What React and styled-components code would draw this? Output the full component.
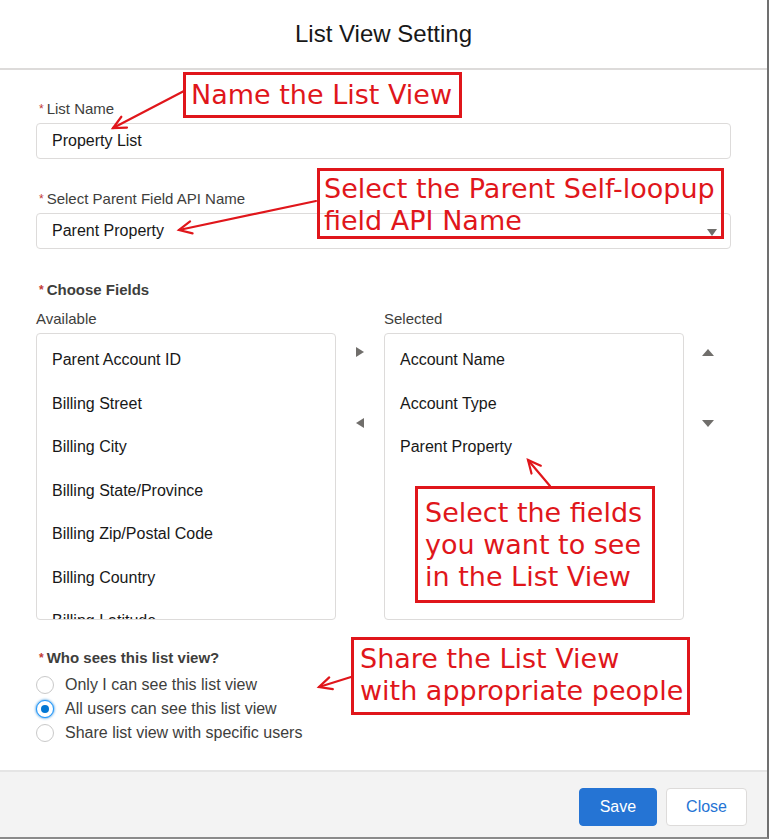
import styled, { createGlobalStyle } from "styled-components";

const GlobalStyle = createGlobalStyle`
  html, body {
    margin: 0;
    padding: 0;
    background: #ffffff;
  }
  body {
    font-family: "Liberation Sans", Arial, sans-serif;
    color: #181818;
  }
`;

const Modal = styled.div`
  position: relative;
  width: 767px;
  height: 837px;
  border-right: 2px solid #707070;
  border-bottom: 2px solid #8a8a8a;
  background: #ffffff;
  display: flex;
  flex-direction: column;
  overflow: hidden;
`;

const Header = styled.header`
  height: 68px;
  border-bottom: 2px solid #dddbda;
  display: flex;
  align-items: center;
  justify-content: center;
  font-size: 24px;
  color: #181818;
`;

const Body = styled.main`
  flex: 1;
  padding: 30px 36px 0 36px;
`;

const Label = styled.div`
  font-size: 15px;
  font-weight: ${(p) => (p.bold ? 700 : 400)};
  line-height: 18px;
  color: #3e3e3c;
  margin: ${(p) => p.margin || "0 0 5px 0"};
  white-space: nowrap;
`;

const Req = styled.abbr`
  color: #c23934;
  font-size: 12px;
  text-decoration: none;
  margin: 0 3px 0 3px;
  vertical-align: 1px;
`;

const Field = styled.div`
  position: relative;
  height: 36px;
  box-sizing: border-box;
  border: 1px solid #dddbda;
  border-radius: 4px;
  padding: 0 15px;
  display: flex;
  align-items: center;
  font-size: 16px;
  color: #181818;
  margin-bottom: ${(p) => p.gap || "31px"};
`;

const Caret = styled.span`
  position: absolute;
  right: 13px;
  top: 15px;
  width: 0;
  height: 0;
  border-left: 5px solid transparent;
  border-right: 5px solid transparent;
  border-top: 7px solid #706e6b;
`;

const Dueling = styled.div`
  display: grid;
  grid-template-columns: 300px 48px 300px 48px;
  grid-template-rows: auto 287px;
`;

const ColLabel = styled.div`
  font-size: 15px;
  line-height: 18px;
  color: #3e3e3c;
  margin: 11px 0 5px 0;
  grid-column: ${(p) => p.col};
`;

const ListBox = styled.ul`
  grid-column: ${(p) => p.col};
  margin: 0;
  padding: 4px 0 0 0;
  list-style: none;
  border: 1px solid #dddbda;
  border-radius: 4px;
  overflow: hidden;
`;

const ListItem = styled.li`
  height: 43.5px;
  line-height: 43.5px;
  padding-left: 15px;
  font-size: 16px;
  color: #181818;
  white-space: nowrap;
`;

const ArrowCol = styled.div`
  grid-column: ${(p) => p.col};
  display: flex;
  flex-direction: column;
  align-items: center;
  padding-top: 7px;
  gap: 47px;
`;

const ArrowBtn = styled.div`
  width: 24px;
  height: 24px;
  display: flex;
  align-items: center;
  justify-content: center;
`;

const Tri = styled.span`
  width: 0;
  height: 0;
  ${(p) =>
    p.dir === "right"
      ? "border-top: 5px solid transparent; border-bottom: 5px solid transparent; border-left: 8px solid #706e6b;"
      : p.dir === "left"
      ? "border-top: 5px solid transparent; border-bottom: 5px solid transparent; border-right: 8px solid #706e6b;"
      : p.dir === "up"
      ? "border-left: 6px solid transparent; border-right: 6px solid transparent; border-bottom: 7px solid #706e6b;"
      : "border-left: 6px solid transparent; border-right: 6px solid transparent; border-top: 7px solid #706e6b;"}
`;

const RadioGroup = styled.div`
  margin-top: 6px;
  display: flex;
  flex-direction: column;
`;

const RadioRow = styled.label`
  height: 24px;
  display: flex;
  align-items: center;
  gap: 11px;
  font-size: 16px;
  color: #3e3e3c;
`;

const RadioDot = styled.span`
  width: 18px;
  height: 18px;
  box-sizing: border-box;
  border-radius: 50%;
  border: 1px solid ${(p) => (p.checked ? "#1b96ff" : "#c9c9c9")};
  box-shadow: ${(p) => (p.checked ? "0 0 3px #0176d3" : "none")};
  display: flex;
  align-items: center;
  justify-content: center;
  background: #ffffff;

  &::after {
    content: "";
    display: ${(p) => (p.checked ? "block" : "none")};
    width: 8px;
    height: 8px;
    border-radius: 50%;
    background: #0176d3;
  }
`;

const Footer = styled.footer`
  height: 67px;
  border-top: 2px solid #e5e5e5;
  background: #f3f3f3;
  display: flex;
  justify-content: flex-end;
  align-items: flex-start;
  padding: 16px 20px 0 0;
  box-sizing: border-box;
  gap: 9px;
`;

const Button = styled.button`
  height: 38px;
  padding: 0 ${(p) => (p.primary ? "20px" : "19px")};
  border-radius: 4px;
  border: 1px solid ${(p) => (p.primary ? "#2574d4" : "#dddbda")};
  background: ${(p) => (p.primary ? "#2574d4" : "#ffffff")};
  color: ${(p) => (p.primary ? "#ffffff" : "#2574d4")};
  font-family: "Liberation Sans", Arial, sans-serif;
  font-size: 16px;
`;

const Note = styled.div`
  position: absolute;
  left: ${(p) => p.x}px;
  top: ${(p) => p.y}px;
  width: ${(p) => p.w}px;
  height: ${(p) => p.h}px;
  box-sizing: border-box;
  border: 3px solid #e0161b;
  padding: ${(p) => p.pad || "4px 5px"};
  font-family: "DejaVu Sans", Verdana, sans-serif;
  font-size: 27px;
  line-height: 32px;
  color: #e0161b;
  white-space: pre;
`;

const Overlay = styled.svg`
  position: absolute;
  left: 0;
  top: 0;
  width: 769px;
  height: 839px;
  pointer-events: none;
`;

const arrows = [
  { from: [184, 91], to: [113, 128] },
  { from: [316, 201], to: [179, 230] },
  { from: [550, 486], to: [528, 460] },
  { from: [351, 677], to: [319, 687] },
];

function Arrow({ from, to }) {
  const [x1, y1] = from;
  const [x2, y2] = to;
  const a = Math.atan2(y1 - y2, x1 - x2);
  const len = 14;
  const spread = 0.45;
  const w1 = [x2 + len * Math.cos(a + spread), y2 + len * Math.sin(a + spread)];
  const w2 = [x2 + len * Math.cos(a - spread), y2 + len * Math.sin(a - spread)];
  return (
    <g stroke="#e0161b" strokeWidth="2.2" fill="none" strokeLinecap="round">
      <line x1={x1} y1={y1} x2={x2} y2={y2} />
      <polyline points={`${w1[0]},${w1[1]} ${x2},${y2} ${w2[0]},${w2[1]}`} />
    </g>
  );
}

const available = [
  "Parent Account ID",
  "Billing Street",
  "Billing City",
  "Billing State/Province",
  "Billing Zip/Postal Code",
  "Billing Country",
  "Billing Latitude",
];

const selected = ["Account Name", "Account Type", "Parent Property"];

const options = [
  { text: "Only I can see this list view", checked: false },
  { text: "All users can see this list view", checked: true },
  { text: "Share list view with specific users", checked: false },
];

export default function App() {
  return (
    <>
      <GlobalStyle />
      <Modal>
        <Header>List View Setting</Header>
        <Body>
          <Label>
            <Req title="required">*</Req>List Name
          </Label>
          <Field>Property List</Field>

          <Label>
            <Req title="required">*</Req>Select Parent Field API Name
          </Label>
          <Field gap="32px">
            Parent Property
            <Caret />
          </Field>

          <Label bold margin="0">
            <Req title="required">*</Req>Choose Fields
          </Label>
          <Dueling>
            <ColLabel col="1">Available</ColLabel>
            <ColLabel col="3">Selected</ColLabel>
            <ListBox col="1">
              {available.map((f) => (
                <ListItem key={f}>{f}</ListItem>
              ))}
            </ListBox>
            <ArrowCol col="2">
              <ArrowBtn>
                <Tri dir="right" />
              </ArrowBtn>
              <ArrowBtn>
                <Tri dir="left" />
              </ArrowBtn>
            </ArrowCol>
            <ListBox col="3">
              {selected.map((f) => (
                <ListItem key={f}>{f}</ListItem>
              ))}
            </ListBox>
            <ArrowCol col="4">
              <ArrowBtn>
                <Tri dir="up" />
              </ArrowBtn>
              <ArrowBtn>
                <Tri dir="down" />
              </ArrowBtn>
            </ArrowCol>
          </Dueling>

          <Label bold margin="29px 0 0 0">
            <Req title="required">*</Req>Who sees this list view?
          </Label>
          <RadioGroup>
            {options.map((o) => (
              <RadioRow key={o.text}>
                <RadioDot checked={o.checked} />
                {o.text}
              </RadioRow>
            ))}
          </RadioGroup>
        </Body>
        <Footer>
          <Button primary>Save</Button>
          <Button>Close</Button>
        </Footer>

        <Note x={183} y={72} w={279} h={46}>
          Name the List View
        </Note>
        <Note x={317} y={168} w={407} h={71} pad="2px 4px">
          {"Select the Parent Self-loopup\nfield API Name"}
        </Note>
        <Note x={415} y={486} w={240} h={117} pad="8px 7px">
          {"Select the fields\nyou want to see\nin the List View"}
        </Note>
        <Note x={351} y={637} w={339} h={78} pad="3px 6px">
          {"Share the List View\nwith appropriate people"}
        </Note>

        <Overlay viewBox="0 0 769 839">
          {arrows.map((a, i) => (
            <Arrow key={i} from={a.from} to={a.to} />
          ))}
        </Overlay>
      </Modal>
    </>
  );
}
